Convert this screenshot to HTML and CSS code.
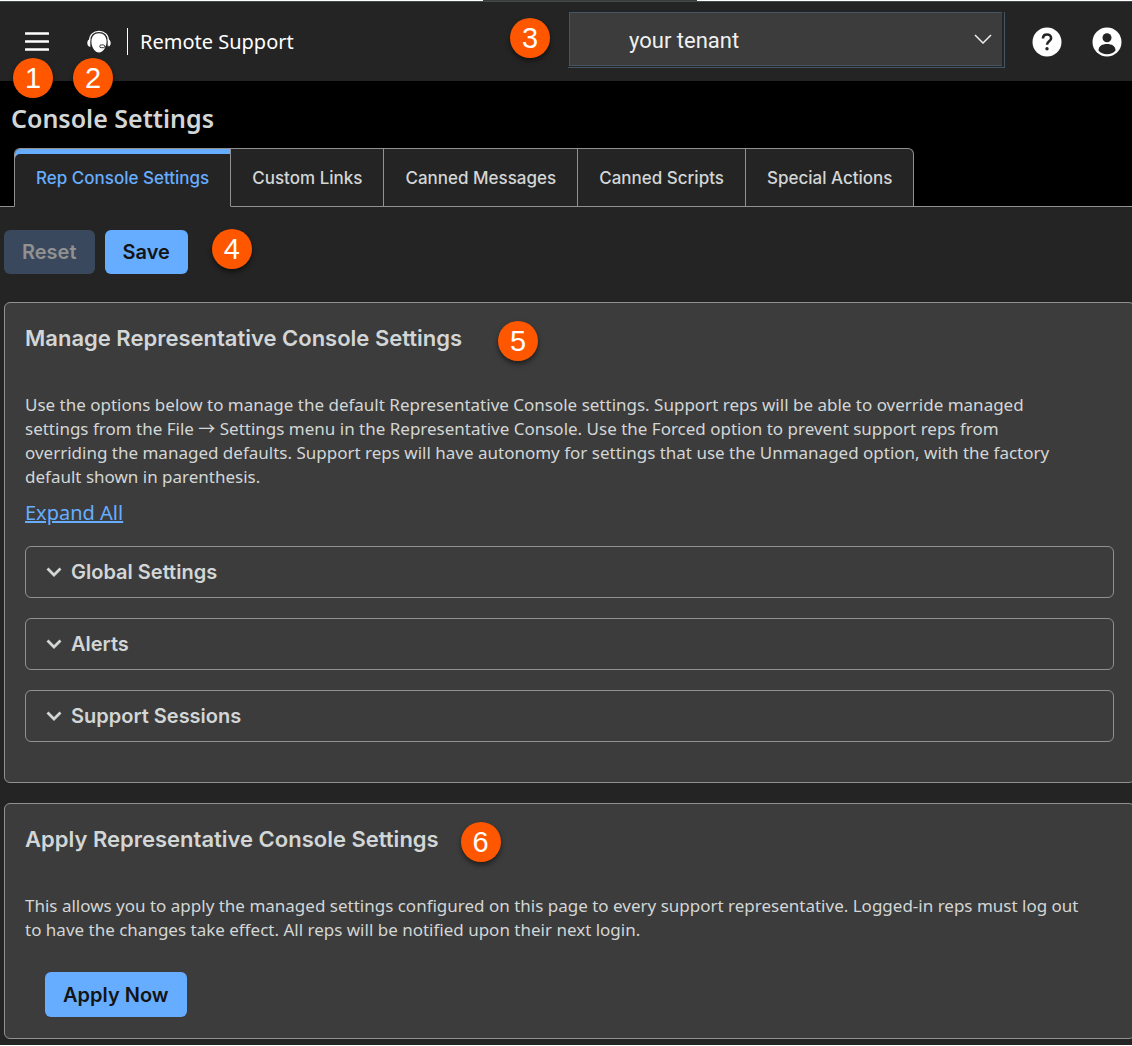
FILE: index.html
```html
<!DOCTYPE html>
<html lang="en">
<head>
<meta charset="utf-8">
<title>Console Settings</title>
<meta name="viewport" content="width=device-width, initial-scale=1">
<link rel="stylesheet" href="styles.css">
</head>
<body>
<div class="window-edge"><span class="window-tab"></span></div>
<div class="page">
  <header class="topbar">
    <button class="icon-button menu-button" type="button" aria-label="Menu">
      <svg width="24" height="20" viewBox="0 0 24 20"><path d="M1 1.500h22M1 9.500h22M1 17.500h22" stroke="#fff" stroke-width="2.600" stroke-linecap="round"/></svg>
      <span class="badge badge-below">1</span>
    </button>
    <a class="product-logo" href="#" aria-label="Home">
      <svg width="24" height="24" viewBox="0 0 24 24" fill="none">
        <path d="M2.500 11C2.500 5 6.500 1.300 12 1.300S21.500 5 21.500 11" stroke="#fff" stroke-width="1.200"/>
        <path d="M12 3.200c-4.700 0-7.600 3.300-7.600 8.300 0 6 3.600 11 7.600 11 2.300 0 4.400-1.700 5.800-4.300 1.100-2 1.800-4.200 1.800-6.700 0-5-2.900-8.300-7.600-8.300z" fill="#fff"/>
        <path d="M3.300 9v8C1.500 16.800.3 15.200.3 13s1.200-3.800 3-4zM20.700 9v8c1.800-.2 3-1.800 3-4s-1.200-3.800-3-4z" fill="#fff"/>
        <rect x="12.700" y="14.900" width="5" height="2.800" rx="1.400" fill="#fff" stroke="#242424" stroke-width=".9"/>
        <path d="M17.700 16.900c1.800.2 3.300-.1 4.300-.9" stroke="#242424" stroke-width=".9"/>
      </svg>
      <span class="badge badge-below">2</span>
    </a>
    <span class="product-name">Remote Support</span>
    <div class="topbar-end">
      <span class="badge badge-inline">3</span>
      <div class="tenant">
        <select class="tenant-select" aria-label="Tenant"><option>your tenant</option></select>
        <svg class="tenant-arrow" width="18" height="10" viewBox="0 0 18 10" fill="none"><path d="M1 1l8 8 8-8" stroke="#eee" stroke-width="1.500"/></svg>
      </div>
      <button class="icon-button help-button" type="button" aria-label="Help">
        <svg width="30" height="30" viewBox="0 0 30 30" fill="none"><circle cx="15" cy="15" r="14.500" fill="#fff"/><path d="M11 11.500c0-2.500 1.700-4 4-4s4.100 1.500 4.100 3.700c0 3.100-4.100 3.200-4.100 6.600" stroke="#242424" stroke-width="2.600"/><circle cx="15" cy="21.800" r="1.700" fill="#242424"/></svg>
      </button>
      <button class="icon-button user-button" type="button" aria-label="Account">
        <svg width="30" height="30" viewBox="0 0 30 30"><circle cx="15" cy="15" r="14.500" fill="#fff"/><circle cx="15" cy="10.700" r="4.500" fill="#242424"/><path d="M6.500 23.500c0-4.500 3.800-6.500 8.500-6.500s8.500 2 8.500 6.500c-2 2.500-5 3.700-8.500 3.700s-6.500-1.200-8.500-3.700z" fill="#242424"/></svg>
      </button>
    </div>
  </header>

  <div class="title-area">
    <h1 class="page-title">Console Settings</h1>
    <nav class="tabs">
      <a class="tab tab-active" href="#">Rep Console Settings</a>
      <a class="tab" href="#">Custom Links</a>
      <a class="tab" href="#">Canned Messages</a>
      <a class="tab" href="#">Canned Scripts</a>
      <a class="tab" href="#">Special Actions</a>
    </nav>
  </div>

  <main class="content">
    <div class="actions">
      <button class="button" type="button" disabled>Reset</button>
      <button class="button" type="button">Save</button>
      <span class="badge badge-actions">4</span>
    </div>

    <section class="panel">
      <h2 class="panel-title">Manage Representative Console Settings<span class="badge badge-manage">5</span></h2>
      <p class="panel-text">Use the options below to manage the default Representative Console settings. Support reps will be able to override managed settings from the File <span class="arrow">→</span> Settings menu in the Representative Console. Use the Forced option to prevent support reps from overriding the managed defaults. Support reps will have autonomy for settings that use the Unmanaged option, with the factory default shown in parenthesis.</p>
      <a class="expand-link" href="#">Expand All</a>
      <div class="groups">
        <button class="group" type="button" aria-expanded="false"><svg width="16" height="10" viewBox="0 0 16 10" fill="none"><path d="M1.500 1.500L8 8l6.500-6.500" stroke="#d3d6d6" stroke-width="2.800"/></svg>Global Settings</button>
        <button class="group" type="button" aria-expanded="false"><svg width="16" height="10" viewBox="0 0 16 10" fill="none"><path d="M1.500 1.500L8 8l6.500-6.500" stroke="#d3d6d6" stroke-width="2.800"/></svg>Alerts</button>
        <button class="group" type="button" aria-expanded="false"><svg width="16" height="10" viewBox="0 0 16 10" fill="none"><path d="M1.500 1.500L8 8l6.500-6.500" stroke="#d3d6d6" stroke-width="2.800"/></svg>Support Sessions</button>
      </div>
    </section>

    <section class="panel panel-apply">
      <h2 class="panel-title">Apply Representative Console Settings<span class="badge badge-apply">6</span></h2>
      <p class="panel-text">This allows you to apply the managed settings configured on this page to every support representative. Logged-in reps must log out to have the changes take effect. All reps will be notified upon their next login.</p>
      <button class="button button-apply" type="button">Apply Now</button>
    </section>
  </main>
</div>
</body>
</html>
```
FILE: styles.css
```css
* { box-sizing: border-box; }

body {
  margin: 0;
  background: #fff;
  color: #d3d6d6;
  font-family: "Noto Sans", sans-serif;
}

.window-edge {
  display: grid;
  grid-template-columns: 483fr 214fr 435fr;
  height: 1px;
  background: #fff;
}

.window-tab {
  grid-column: 2;
  background: #3c3c3c;
}

.page {
  overflow: hidden;
  background: #242424;
}

.topbar {
  display: flex;
  align-items: center;
  height: 80px;
  padding: 0 10px 0 25px;
  border-top: 1px solid #44494b;
  background: #242424;
}

.icon-button {
  position: relative;
  display: flex;
  padding: 0;
  border: 0;
  background: none;
}

.product-logo {
  position: relative;
  display: flex;
  margin: 0 16px 0 38px;
}

.product-name {
  padding: 0 0 0 12px;
  border-left: 1px solid #fff;
  color: #fff;
  font-size: 20px;
  line-height: 27px;
}

.topbar-end {
  display: flex;
  align-items: center;
  margin-left: auto;
}

.tenant {
  position: relative;
  width: 437px;
  margin-bottom: 3px;
  padding: 0 2px 1px 1px;
  border: solid #465563;
  border-width: 0 1px 1px 0;
}

.tenant-select {
  display: block;
  width: 100%;
  height: 54px;
  padding: 2px 59px 0;
  appearance: none;
  border: 1px solid #465563;
  border-right: 0;
  border-radius: 0;
  background: #3c3c3c;
  color: #f0f0f0;
  font: 400 22px/27px Roboto, sans-serif;
}

.tenant-arrow {
  position: absolute;
  top: 22px;
  right: 12px;
  pointer-events: none;
}

.help-button { margin: 0 30px 0 27px; }

.badge {
  width: 40px;
  height: 40px;
  border-radius: 50%;
  background: #ff5600;
  box-shadow: 0 3px 5px rgba(0, 0, 0, 0.5);
  color: #fff;
  font: 400 29px/41px "Liberation Sans", sans-serif;
  text-align: center;
}

.badge-below {
  position: absolute;
  z-index: 1;
  top: 100%;
  left: 50%;
  margin: 6px 0 0 -24px;
}

.product-logo .badge-below {
  margin: 4px 0 0 -26px;
}

.badge-inline { margin: 0 18px 7px 0; }

.title-area {
  padding-top: 21px;
  background: #000;
}

.page-title {
  margin: 0 0 14px 11px;
  font-size: 25px;
  font-weight: 600;
  line-height: 32px;
}

.tabs {
  display: flex;
  padding-left: 14px;
  background: linear-gradient(#919191, #919191) bottom / 100% 1px no-repeat;
}

.tab {
  padding: 18px 21px 17px;
  border: 1px solid #919191;
  border-left: 0;
  background: #242424;
  color: #d3d6d6;
  font: 500 17px/22px Inter, sans-serif;
  text-decoration: none;
  white-space: nowrap;
}

.tab:last-child { border-top-right-radius: 6px; }

.tab-active {
  border-left: 1px solid #919191;
  border-bottom-color: #242424;
  border-top-left-radius: 6px;
  box-shadow: inset 0 5px #67adff;
  color: #67adff;
}

.content { padding: 23px 0 6px 4px; }

.actions {
  display: flex;
  align-items: center;
  gap: 10px;
  height: 44px;
  margin-bottom: 28px;
}

.button {
  height: 44px;
  padding: 0 18px;
  border: 0;
  border-radius: 6px;
  background: #67adff;
  color: #141414;
  font: 600 20px/24px Inter, sans-serif;
}

.button:disabled {
  background: #39485c;
  color: #919191;
}

.badge-actions { margin: 0 0 6px 14px; }

.panel {
  margin: 0 -3px 20px 0;
  padding: 19px 20px 40px;
  border: 1px solid #919191;
  border-radius: 6px;
  background: #3c3c3c;
}

.panel-title {
  display: flex;
  align-items: center;
  height: 32px;
  margin: 0 0 39px;
  font: 600 22px/32px Inter, sans-serif;
}

.badge-manage { margin: 6px 0 0 36px; }
.badge-apply { margin: 5px 0 0 22px; }

.panel-text {
  max-width: 1060px;
  margin: 0 0 10px;
  font-size: 17px;
  line-height: 24px;
}

.arrow {
  font-family: "Noto Sans CJK SC", sans-serif;
  line-height: 1;
}

.expand-link {
  display: inline-block;
  color: #67adff;
  font-size: 20px;
  line-height: 28px;
}

.groups {
  display: grid;
  gap: 20px;
  margin-top: 19px;
}

.group {
  display: flex;
  align-items: center;
  gap: 9px;
  height: 52px;
  padding: 0 20px;
  border: 1px solid #919191;
  border-radius: 6px;
  background: none;
  color: #d3d6d6;
  font: 600 20px/24px Inter, sans-serif;
}

.panel-apply {
  margin-bottom: 0;
  padding-bottom: 21px;
}

.button-apply {
  display: block;
  height: 45px;
  margin: 30px 0 0 20px;
}
```
